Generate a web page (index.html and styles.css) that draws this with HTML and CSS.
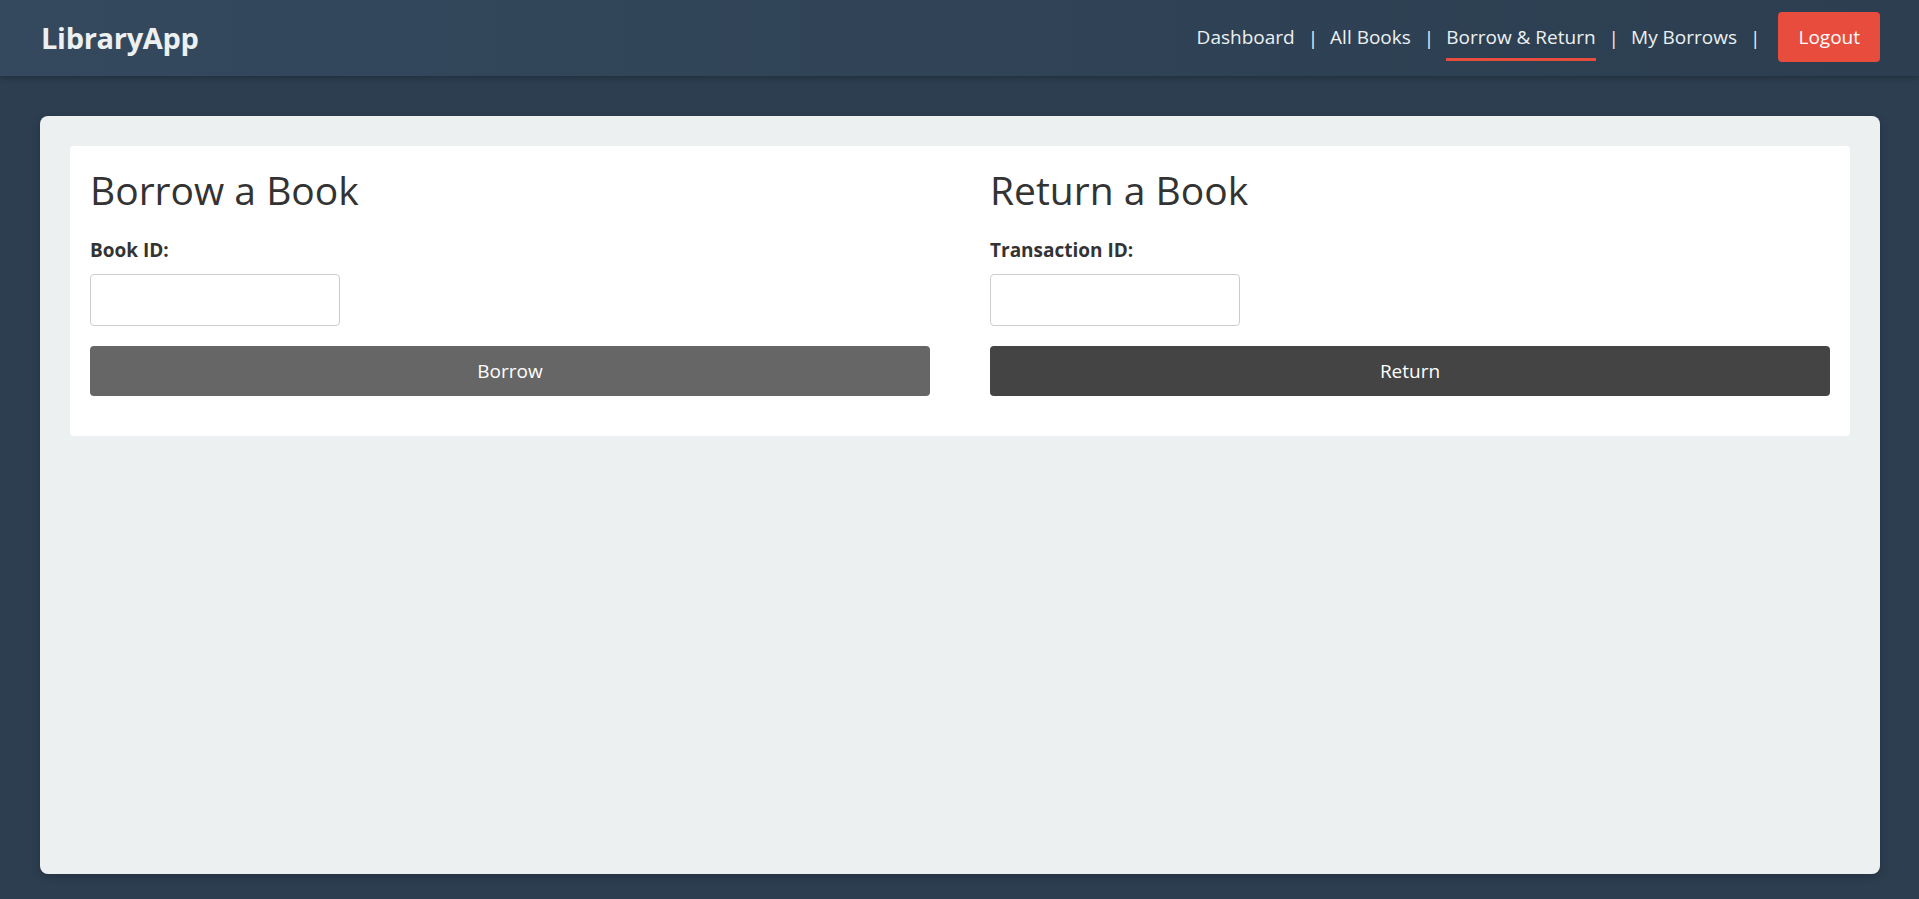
FILE: index.html
```html
<!DOCTYPE html>
<html lang="en">
<head>
<meta charset="utf-8">
<title>LibraryApp - Borrow &amp; Return</title>
<link rel="stylesheet" href="styles.css">
</head>
<body>
<header class="topbar">
  <div class="logo">LibraryApp</div>
  <nav class="nav">
    <a class="nav-link" href="#">Dashboard</a>
    <span class="sep">|</span>
    <a class="nav-link" href="#">All Books</a>
    <span class="sep">|</span>
    <a class="nav-link active" href="#">Borrow &amp; Return</a>
    <span class="sep">|</span>
    <a class="nav-link" href="#">My Borrows</a>
    <span class="sep">|</span>
    <a class="logout" href="#">Logout</a>
  </nav>
</header>
<main class="page">
  <section class="card">
    <div class="panel">
      <form class="col">
        <h2 class="col-title">Borrow a Book</h2>
        <label class="field-label" for="bookId">Book ID:</label>
        <input class="field-input" id="bookId" type="text">
        <button class="btn btn-borrow" type="button">Borrow</button>
      </form>
      <form class="col">
        <h2 class="col-title">Return a Book</h2>
        <label class="field-label" for="txId">Transaction ID:</label>
        <input class="field-input" id="txId" type="text">
        <button class="btn btn-return" type="button">Return</button>
      </form>
    </div>
  </section>
</main>
</body>
</html>
```
FILE: styles.css
```css
* { box-sizing: border-box; }

html, body { height: 100%; }

body {
  margin: 0;
  background: #2c3e50;
  font-family: "Open Sans", "Noto Sans", sans-serif;
  color: #333;
  display: flex;
  flex-direction: column;
}

.topbar {
  height: 76px;
  flex: 0 0 76px;
  padding: 0 39px 0 41px;
  display: flex;
  align-items: center;
  justify-content: space-between;
  background: linear-gradient(90deg, #34495e 0%, #2c3e50 100%);
  box-shadow: 0 2px 6px rgba(0, 0, 0, 0.25);
  position: relative;
  z-index: 1;
}

.logo {
  color: #ecf0f1;
  font-size: 29px;
  font-weight: 700;
  line-height: 34px;
  letter-spacing: -0.3px;
}

.nav {
  display: flex;
  align-items: center;
}

.nav-link {
  color: #ecf0f1;
  text-decoration: none;
  font-size: 19px;
  line-height: 24px;
  padding: 10px 0 9px;
  border-bottom: 3px solid transparent;
}

.nav-link.active { border-bottom-color: #e74c3c; }

.sep {
  color: #ecf0f1;
  font-size: 19px;
  line-height: 24px;
  margin: 0 12px 0 13px;
}

.logout {
  margin: 0 0 3px 6px;
  background: #e74c3c;
  color: #fff;
  text-decoration: none;
  font-size: 19px;
  line-height: 24px;
  padding: 13px 20px;
  border-radius: 4px;
}

.page {
  flex: 1;
  padding: 40px 39px 25px 40px;
  display: flex;
}

.card {
  flex: 1;
  background: #ecf0f1;
  border-radius: 8px;
  padding: 30px;
  box-shadow: 0 3px 8px rgba(0, 0, 0, 0.2);
}

.panel {
  background: #fff;
  border-radius: 4px;
  padding: 20px;
  display: grid;
  grid-template-columns: 1fr 1fr;
  column-gap: 60px;
}

.col {
  display: flex;
  flex-direction: column;
  align-items: flex-start;
  padding-bottom: 20px;
}

.col-title {
  margin: 0;
  font-size: 39px;
  font-weight: 500;
  line-height: 48px;
  color: #333;
}

.field-label {
  margin-top: 24px;
  font-size: 19px;
  font-weight: 700;
  line-height: 24px;
  color: #333;
}

.field-input {
  margin-top: 12px;
  width: 250px;
  height: 52px;
  border: 1px solid #ccc;
  border-radius: 4px;
  background: #fff;
  font-family: inherit;
  font-size: 18px;
  padding: 0 12px;
}

.btn {
  margin-top: 20px;
  width: 100%;
  height: 50px;
  border: none;
  border-radius: 4px;
  color: #fff;
  font-family: inherit;
  font-size: 19px;
  cursor: pointer;
}

.btn-borrow { background: #666; }
.btn-return { background: #444; }
```
